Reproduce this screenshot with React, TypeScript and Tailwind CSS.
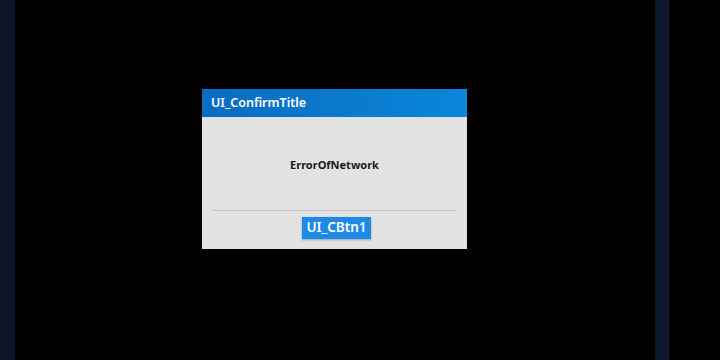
export default function App() {
  return (
    <div
      className="relative w-[720px] h-[360px] bg-black overflow-hidden flex"
      style={{ fontFamily: '"Noto Sans", "Open Sans", sans-serif' }}
    >
      <div className="w-[15px] h-full bg-[#0d1628]" />
      <div className="flex-1 relative">
        <div className="absolute left-[187px] top-[89px] w-[265px] h-[160px] bg-[#e2e2e2] flex flex-col">
          <div className="h-[28px] bg-gradient-to-r from-[#0a6cc0] to-[#0a86da] flex items-center pl-[9px]">
            <span className="text-white text-[12.5px] font-semibold leading-none">UI_ConfirmTitle</span>
          </div>
          <div className="h-[93px] flex items-center justify-center pt-[4px]">
            <span className="text-[#1a1a1a] text-[11px] font-bold">ErrorOfNetwork</span>
          </div>
          <div className="mx-[11px] h-[1px] bg-[#c4c4c4]" />
          <div className="flex justify-center pt-[6px] pl-[4px]">
            <div className="h-[22px] px-[4px] bg-[#1e8ae8] flex items-center shadow-[0_1px_2px_rgba(0,0,0,0.3)]">
              <span className="text-white text-[13.5px] font-semibold leading-none">UI_CBtn1</span>
            </div>
          </div>
        </div>
      </div>
      <div className="w-[14px] h-full bg-[#0e172b] mr-[51px]" />
    </div>
  );
}
